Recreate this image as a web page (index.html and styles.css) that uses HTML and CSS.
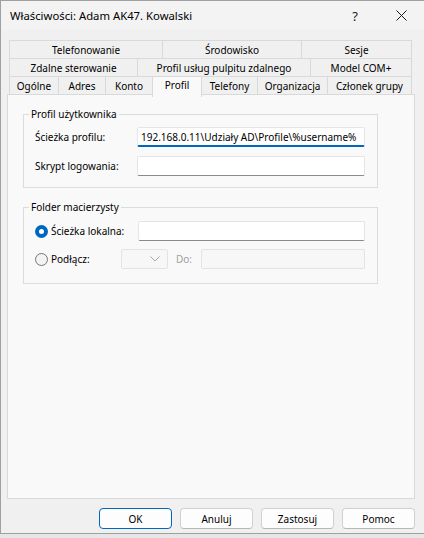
FILE: index.html
```html
<!DOCTYPE html>
<html lang="pl">
<head>
<meta charset="utf-8">
<title>Właściwości</title>
<link rel="stylesheet" href="styles.css">
</head>
<body>
<div class="window">
  <div class="titlebar">
    <span class="title">Właściwości: Adam AK47. Kowalski</span>
    <span class="cap-btn help">?</span>
    <span class="cap-btn close">
      <svg width="11" height="11" viewBox="0 0 11 11"><path d="M0.5 0.5 L10.5 10.5 M10.5 0.5 L0.5 10.5" stroke="#1a1a1a" stroke-width="1" fill="none"/></svg>
    </span>
  </div>
  <div class="content">
    <div class="tabs">
      <div class="tabrow r1">
        <div class="tab">Telefonowanie</div>
        <div class="tab">Środowisko</div>
        <div class="tab">Sesje</div>
      </div>
      <div class="tabrow r2">
        <div class="tab">Zdalne sterowanie</div>
        <div class="tab">Profil usług pulpitu zdalnego</div>
        <div class="tab">Model COM+</div>
      </div>
      <div class="tabrow r3">
        <div class="tab">Ogólne</div>
        <div class="tab">Adres</div>
        <div class="tab">Konto</div>
        <div class="tab active">Profil</div>
        <div class="tab">Telefony</div>
        <div class="tab">Organizacja</div>
        <div class="tab">Członek grupy</div>
      </div>
    </div>
    <div class="panel">
      <fieldset class="group g1">
        <legend>Profil użytkownika</legend>
        <div class="grid">
          <label class="lbl">Ścieżka profilu:</label>
          <div class="input focused"><span>192.168.0.11\Udziały AD\Profile\%username%</span></div>
          <label class="lbl">Skrypt logowania:</label>
          <div class="input"></div>
        </div>
      </fieldset>
      <fieldset class="group g2">
        <legend>Folder macierzysty</legend>
        <div class="rows">
          <div class="row">
            <span class="radio-lbl w1"><span class="radio checked"></span>Ścieżka lokalna:</span>
            <div class="input"></div>
          </div>
          <div class="row">
            <span class="radio-lbl w2"><span class="radio"></span>Podłącz:</span>
            <div class="select disabled">
              <svg width="10" height="6" viewBox="0 0 10 6"><path d="M0.5 0.5 L5 5 L9.5 0.5" stroke="#a8a8a8" stroke-width="1" fill="none"/></svg>
            </div>
            <span class="do">Do:</span>
            <div class="input disabled"></div>
          </div>
        </div>
      </fieldset>
    </div>
    <div class="buttons">
      <button class="btn default">OK</button>
      <button class="btn">Anuluj</button>
      <button class="btn">Zastosuj</button>
      <button class="btn">Pomoc</button>
    </div>
  </div>
</div>
</body>
</html>
```
FILE: styles.css
```css
* { box-sizing: border-box; margin: 0; padding: 0; }
html, body { width: 424px; height: 538px; overflow: hidden; }
body {
  background: #e6e6e6;
  font-family: "Noto Sans", "Open Sans", sans-serif;
  font-size: 10px;
  color: #000;
}
.window {
  width: 424px;
  height: 534px;
  background: #f0f0f0;
  border: 1px solid #a0a0a0;
  border-right: none;
  display: flex;
  flex-direction: column;
}
.titlebar {
  height: 29px;
  display: flex;
  align-items: center;
  background: #f3f3f3;
  padding-left: 9px;
}
.title { flex: 1; font-size: 11.3px; color: #000; }
.cap-btn {
  width: 46px;
  height: 29px;
  display: flex;
  align-items: center;
  justify-content: center;
}
.help { font-size: 13px; color: #1a1a1a; }
.content { padding: 10px 9px 0 6px; }
.tabs { margin: 0 3px 0 2px; }
.tabrow { display: grid; height: 19px; }
.tabrow + .tabrow { margin-top: -1px; }
.r1 { grid-template-columns: 154px 139px 110px; }
.r2 { grid-template-columns: 129px 173px 101px; }
.r3 { grid-template-columns: 50px 47px 47px 49px 56px 70px 84px; align-items: end; }
.tab {
  height: 19px;
  border-top: 1px solid #d9d9d9;
  border-right: 1px solid #d9d9d9;
  background: #f0f0f0;
  display: flex;
  align-items: center;
  justify-content: center;
  white-space: nowrap;
  line-height: 1;
  padding-bottom: 1px;
}
.tab:first-child { border-left: 1px solid #d9d9d9; }
.tab.active {
  position: relative;
  z-index: 2;
  height: 21px;
  margin-bottom: -2px;
  margin-left: -1px;
  border-left: 1px solid #d9d9d9;
  background: #f9f9f9;
  padding-bottom: 4px;
}
.panel {
  position: relative;
  z-index: 1;
  margin-top: -1px;
  height: 405px;
  background: #f9f9f9;
  border: 1px solid #d9d9d9;
  padding: 12px 36px 0 15px;
}
.group {
  border: 1px solid #dcdcdc;
  padding: 0;
}
.group legend {
  margin-left: 5px;
  padding: 0 2px;
  line-height: 14px;
}
.g2 { margin-top: 12px; }
.grid {
  display: grid;
  grid-template-columns: 102px 1fr;
  row-gap: 9px;
  align-items: center;
  padding: 6px 12px 11px 11px;
}
.input {
  height: 20px;
  background: #fff;
  border: 1px solid #e5e5e5;
  border-bottom: 1px solid #8a8a8a;
  border-radius: 2px;
  overflow: hidden;
  white-space: nowrap;
  padding: 2px 3px 0 3px;
  line-height: 14px;
}
.input.focused {
  border-bottom: 2px solid #0067c0;
}
.input.disabled {
  background: #f7f7f7;
  border: 1px solid #e3e3e3;
}
.rows { padding: 7px 12px 14px 11px; display: flex; flex-direction: column; gap: 8px; }
.row { display: flex; align-items: center; }
.row .input { flex: 1; }
.radio-lbl { display: flex; align-items: center; }
.w1 { width: 103px; }
.w2 { width: 86px; }
.radio {
  width: 13px;
  height: 13px;
  border-radius: 50%;
  border: 1px solid #767676;
  background: #f3f3f3;
  margin-right: 3px;
  flex: none;
}
.radio.checked {
  border: 4px solid #0067c0;
  background: #fff;
}
.select {
  width: 47px;
  height: 20px;
  border: 1px solid #e3e3e3;
  border-radius: 2px;
  background: #f7f7f7;
  display: flex;
  align-items: center;
  justify-content: flex-end;
  padding-right: 7px;
}
.do { width: 33px; padding-left: 8px; color: #a0a0a0; }
.buttons {
  display: flex;
  justify-content: flex-end;
  gap: 8px;
  padding-top: 9px;
}
.btn {
  width: 73px;
  height: 21px;
  font-family: inherit;
  font-size: 10px;
  color: #000;
  background: #fdfdfd;
  border: 1px solid #d0d0d0;
  border-bottom-color: #b8b8b8;
  border-radius: 4px;
}
.btn.default { border: 1px solid #0067c0; }
```
